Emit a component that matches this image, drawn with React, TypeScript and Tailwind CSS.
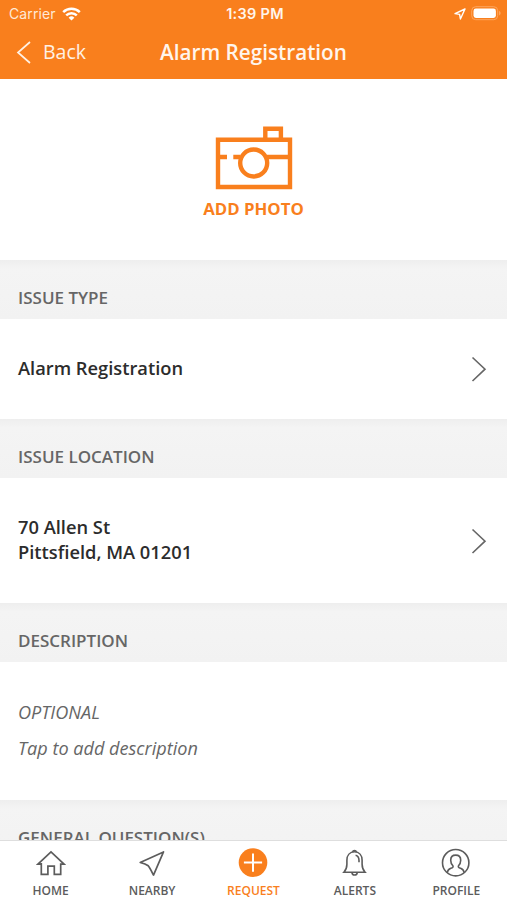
import type { ReactNode } from 'react'

type TabType = 'home' | 'nearby' | 'request' | 'alerts' | 'profile'

const TABS = [
  { id: 'home'    as TabType, label: 'HOME' },
  { id: 'nearby'  as TabType, label: 'NEARBY' },
  { id: 'request' as TabType, label: 'REQUEST' },
  { id: 'alerts'  as TabType, label: 'ALERTS' },
  { id: 'profile' as TabType, label: 'PROFILE' },
]

function StatusBar() {
  return (
    <div className="grid grid-cols-3 items-center h-[27px] pl-[9px] pr-[6px] font-['Inter',sans-serif] text-white">
      <div className="flex items-center gap-[6px]">
        <span className="text-[14px] leading-5 tracking-[0.1px] text-[#ffe9d6]">Carrier</span>
        <svg width="19" height="14" viewBox="0 0 19 14" fill="none" stroke="currentColor" strokeWidth="2.5">
          <path d="M1.2 5.2a11.9 11.9 0 0 1 16.6 0" />
          <path d="M4.2 8.3a7.6 7.6 0 0 1 10.6 0" />
          <path d="M9.5 13.6 6.6 10.7a4.1 4.1 0 0 1 5.8 0Z" fill="currentColor" stroke="none" />
        </svg>
      </div>
      <span className="text-center text-[14.5px] leading-5 tracking-[0.3px] font-semibold whitespace-nowrap text-[#fff5ec]">1:39 PM</span>
      <div className="flex items-center justify-end gap-[5px]">
        <svg width="12" height="12" viewBox="0 0 12 12" fill="none" stroke="currentColor" strokeWidth="1.4" strokeLinejoin="round">
          <path d="M11 1 1 5.6l4.6.8.8 4.6Z" />
        </svg>
        <svg width="30" height="15" viewBox="0 0 30 15">
          <rect x="0.7" y="0.7" width="26" height="13" rx="4" fill="none" stroke="#fda65e" strokeWidth="1" />
          <rect x="2.5" y="2.5" width="22.4" height="9.4" rx="2.4" fill="#fff" />
          <path d="M28 5v4.4c1.1-.4 1.6-1.2 1.6-2.2S29.1 5.4 28 5Z" fill="#fda65e" />
        </svg>
      </div>
    </div>
  )
}

function Header() {
  return (
    <header className="h-[79px] shrink-0 bg-[#f97f1d] text-white">
      <StatusBar />
      <div className="grid grid-cols-[1fr_auto_1fr] items-center h-[50px] px-4">
        <button className="flex items-center gap-[12px] text-[19.5px] leading-7 text-[#fff1e4]">
          <svg width="15" height="24" viewBox="0 0 15 24" fill="none" stroke="currentColor" strokeWidth="1.7">
            <path d="M14 2 2 12.5 14 23" />
          </svg>
          Back
        </button>
        <h1 className="text-[20.7px] leading-7 font-semibold text-[#fff5ec]">Alarm Registration</h1>
      </div>
    </header>
  )
}

function CameraIcon() {
  return (
    <svg width="78" height="64" viewBox="0 0 78 64" fill="none" stroke="currentColor" strokeWidth="4.4">
      <path d="M3 13.7h72v47.3H3Z" />
      <path d="M50.3 13.7V2.7h15.6v11" />
      <circle cx="38.7" cy="37" r="13.5" />
      <path d="M5 31h7M18.3 31h7M52 31h22" />
    </svg>
  )
}

function SectionTitle({ children }: { children: ReactNode }) {
  return (
    <div className="h-[59px] shrink-0 pt-[26px] pl-[18px] bg-linear-to-b from-[#eeeeee] via-[#f4f4f4] via-15% to-[#f2f2f2]">
      <h2 className="text-[17px] leading-6 font-semibold text-[#666] whitespace-nowrap">{children}</h2>
    </div>
  )
}

function Row({ children, className }: { children: ReactNode; className: string }) {
  return (
    <button className={`flex items-center justify-between w-full shrink-0 pl-[18px] pr-5 text-left ${className}`}>
      <span className="pb-[4px] text-[18.3px] leading-[25px] font-semibold text-[#2c2c2c]">{children}</span>
      <svg width="16" height="26" viewBox="0 0 16 26" fill="none" stroke="#666" strokeWidth="1.6">
        <path d="M1.5 1.5 14 13.2 1.5 25" />
      </svg>
    </button>
  )
}

function TabIcon({ type }: { type: TabType }) {
  switch (type) {
    case 'home':
      return (
        <svg width="30" height="30" viewBox="0 0 30 30" fill="none" stroke="currentColor" strokeWidth="1.7">
          <path d="M5.3 16.1H2L15 3.9l13 12.2h-3.3v10.3h-6.4v-8.2h-6.4v8.2H5.300V15" />
        </svg>
      )
    case 'nearby':
      return (
        <svg width="30" height="30" viewBox="0 0 30 30" fill="none" stroke="currentColor" strokeWidth="1.7" strokeLinejoin="round">
          <path d="M26.5 3.900 3.200 14.500c3.400.900 6 1.800 8 3.300 1.800 2.300 3.400 5.600 5.300 9.300Z" />
        </svg>
      )
    case 'request':
      return (
        <svg width="30" height="30" viewBox="0 0 30 30">
          <circle cx="15" cy="14.6" r="14.3" fill="currentColor" />
          <path d="M15 5.5v18.200M5.900 14.600h18.200" stroke="#fff" strokeWidth="2" />
        </svg>
      )
    case 'alerts':
      return (
        <svg width="30" height="30" viewBox="0 0 30 30" fill="none" stroke="currentColor" strokeWidth="1.6">
          <path d="M3.900 24.200h21.200c-2.200-2.400-3-4.700-3-8v-4c0-4.900-2.900-8.400-7.600-8.400s-7.600 3.500-7.600 8.400v4c0 3.300-.8 5.600-3 8Z" />
          <path d="M12.600 4a1.950 1.950 0 0 1 3.800 0M12 24.400a2.600 2.600 0 0 0 5.200 0M15.600 7.300c2.200.5 3.400 2.400 3.400 5.200v1.700" />
        </svg>
      )
    case 'profile':
      return (
        <svg width="30" height="30" viewBox="0 0 30 30" fill="none" stroke="currentColor" strokeWidth="1.6">
          <circle cx="14.700" cy="14.700" r="13.200" />
          <path d="M6.200 24.600c.5-2.500 1.700-3.600 3.600-4.300 2-.7 2.700-1.300 2.100-2.500-1.500-1.600-2.200-3.400-2.200-5.600 0-3.200 1.900-5.100 5-5.100s5 1.900 5 5.100c0 2.200-.7 4-2.200 5.600-.6 1.200.1 1.800 2.100 2.500 1.900.7 3.100 1.800 3.600 4.300" />
        </svg>
      )
  }
}

function TabBar({ active }: { active: TabType }) {
  return (
    <nav className="grid grid-cols-5 h-[60px] shrink-0 border-t border-[#dedede] bg-white">
      {TABS.map(t => (
        <button key={t.id} className={`flex flex-col items-center pt-[7px] ${t.id === active ? 'text-[#f97f1d]' : 'text-[#5c5c5c]'}`}>
          <TabIcon type={t.id} />
          <span className="mt-[5px] text-[12px] leading-4 font-semibold">{t.label}</span>
        </button>
      ))}
    </nav>
  )
}

export default function App() {
  return (
    <div className="flex flex-col h-[900px] overflow-hidden bg-white font-['Open_Sans','Noto_Sans',sans-serif]">
      <Header />

      <main className="flex flex-col flex-1 min-h-0 overflow-hidden">
        <button className="flex flex-col items-center h-[181px] shrink-0 pt-[47px] text-[#f97f1d]">
          <CameraIcon />
          <span className="mt-[7px] text-[16.8px] leading-6 font-bold">ADD PHOTO</span>
        </button>

        <SectionTitle>ISSUE TYPE</SectionTitle>
        <Row className="h-[100px]">Alarm Registration</Row>

        <SectionTitle>ISSUE LOCATION</SectionTitle>
        <Row className="h-[125px]">
          70 Allen St<br />Pittsfield, MA 01201
        </Row>

        <SectionTitle>DESCRIPTION</SectionTitle>
        <div className="flex flex-col gap-3 h-[138px] shrink-0 pt-[38px] pl-[18px] text-[18.1px] leading-6 italic text-[#666]">
          <span>OPTIONAL</span>
          <span>Tap to add description</span>
        </div>

        <SectionTitle>GENERAL QUESTION(S)</SectionTitle>
      </main>

      <TabBar active="request" />
    </div>
  )
}
